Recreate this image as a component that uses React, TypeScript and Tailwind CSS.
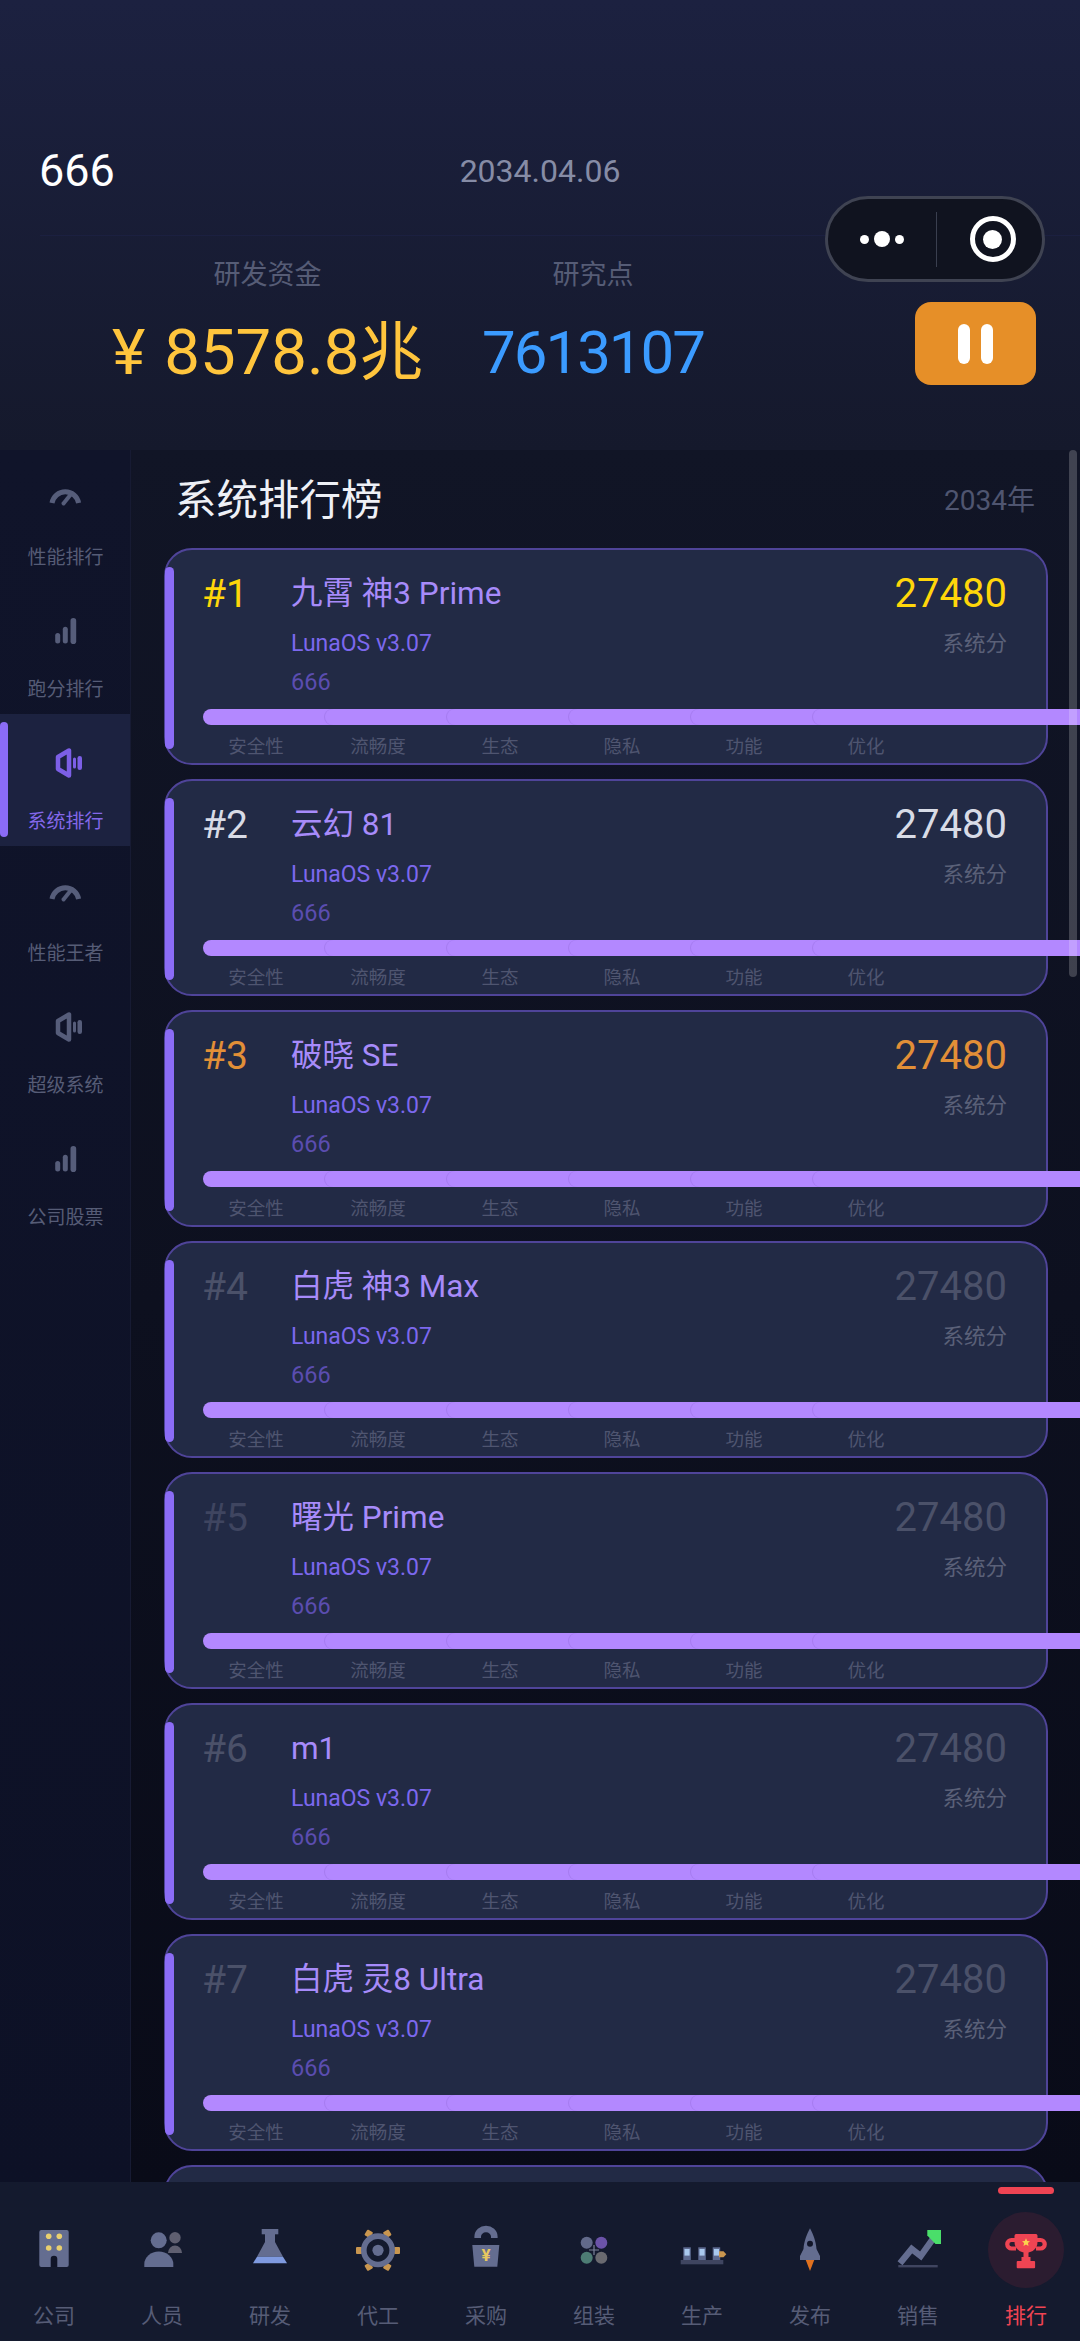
const FONT = "font-['Roboto','Noto_Sans_CJK_SC',sans-serif]";

const sideItems = [
  { label: '性能排行', icon: 'gauge' },
  { label: '跑分排行', icon: 'bars' },
  { label: '系统排行', icon: 'speaker', active: true },
  { label: '性能王者', icon: 'gauge' },
  { label: '超级系统', icon: 'speaker' },
  { label: '公司股票', icon: 'bars' },
];

const ranks = [
  { name: '九霄 神3 Prime', rank: 'text-[#ffd60a]', score: 'text-[#ffd60a]' },
  { name: '云幻 81', rank: 'text-[#d8dbe6]', score: 'text-[#d8dbe6]' },
  { name: '破晓 SE', rank: 'text-[#e28f37]', score: 'text-[#e28f37]' },
  { name: '白虎 神3 Max', rank: 'text-[#4b5169]', score: 'text-[#4b5169]' },
  { name: '曙光 Prime', rank: 'text-[#3f4560]', score: 'text-[#4b5169]' },
  { name: 'm1', rank: 'text-[#4b5169]', score: 'text-[#4b5169]' },
  { name: '白虎 灵8 Ultra', rank: 'text-[#4b5169]', score: 'text-[#4b5169]' },
];

const metrics = ['安全性', '流畅度', '生态', '隐私', '功能', '优化'];

const navItems = ['公司', '人员', '研发', '代工', '采购', '组装', '生产', '发布', '销售', '排行'];

function SideIcon({ type, color }: { type: string; color: string }) {
  if (type === 'gauge') {
    return (
      <svg width="40" height="40" viewBox="0 0 40 40" fill="none">
        <path d="M7 24A13.5 13.5 0 0 1 33.6 24" stroke={color} strokeWidth="5" />
        <path d="M18.5 24.5L26.5 14.5" stroke={color} strokeWidth="4" strokeLinecap="round" />
      </svg>
    );
  }
  if (type === 'bars') {
    return (
      <svg width="40" height="40" viewBox="0 0 40 40" fill={color}>
        <rect x="10.2" y="22" width="5" height="10.5" rx="2.5" />
        <rect x="17.8" y="15.7" width="5" height="16.8" rx="2.5" />
        <rect x="25.5" y="7" width="5.7" height="26" rx="2.8" />
      </svg>
    );
  }
  return (
    <svg width="40" height="40" viewBox="0 0 40 40" fill="none">
      <path d="M13 14L24 7.5V32.5L13 26Z" stroke={color} strokeWidth="4.5" strokeLinejoin="round" />
      <rect x="28" y="14.5" width="3" height="11" rx="1.5" fill={color} />
      <rect x="32.5" y="13" width="4.5" height="14" rx="2.2" fill={color} />
    </svg>
  );
}

function NavIcon({ index }: { index: number }) {
  const c = '#646d90';
  switch (index) {
    case 0:
      return (
        <svg width="60" height="60" viewBox="0 0 60 60">
          <rect x="15.3" y="10" width="29.4" height="37" rx="2" fill={c} />
          <circle cx="24.7" cy="16.3" r="2.8" fill="#e8cf6f" />
          <circle cx="35.3" cy="16.3" r="2.8" fill="#e8cf6f" />
          <circle cx="24.7" cy="28" r="2.8" fill="#e8cf6f" />
          <circle cx="35.3" cy="28" r="2.8" fill="#e8cf6f" />
          <path d="M26.7 47V39a3.3 3.3 0 0 1 6.6 0V47Z" fill="#111528" />
        </svg>
      );
    case 1:
      return (
        <svg width="60" height="60" viewBox="0 0 60 60">
          <circle cx="43" cy="17.7" r="5.7" fill="#5f5f70" />
          <path d="M36 33a7 7.5 0 0 1 14 0Z" fill="#5f5f70" />
          <circle cx="26.7" cy="20.3" r="8" fill={c} />
          <path d="M12.3 47V44a14.5 12.5 0 0 1 29 0V47Z" fill={c} />
        </svg>
      );
    case 2:
      return (
        <svg width="60" height="60" viewBox="0 0 60 60">
          <rect x="21.7" y="9" width="16.6" height="5.3" fill={c} />
          <path d="M25 14H35V22L43 36.7H17L25 22Z" fill={c} />
          <path d="M17 36.7H43L47 43.3H13Z" fill="#7f9ae0" />
        </svg>
      );
    case 3:
      return (
        <svg width="60" height="60" viewBox="0 0 60 60">
          <g fill="#c9964f">
            <rect x="8" y="27" width="6" height="7" rx="1" />
            <rect x="46" y="27" width="6" height="7" rx="1" />
            <rect x="17.5" y="10.5" width="6.5" height="6.5" rx="1" transform="rotate(30 20.7 13.7)" />
            <rect x="36" y="10.5" width="6.5" height="6.5" rx="1" transform="rotate(-30 39.3 13.7)" />
            <rect x="17.5" y="43.5" width="6.5" height="6.5" rx="1" transform="rotate(-30 20.7 46.7)" />
            <rect x="36" y="43.5" width="6.5" height="6.5" rx="1" transform="rotate(30 39.3 46.7)" />
          </g>
          <circle cx="30" cy="30.3" r="14.2" fill="none" stroke={c} strokeWidth="5.6" />
          <circle cx="30" cy="30.3" r="5.6" fill={c} />
        </svg>
      );
    case 4:
      return (
        <svg width="60" height="60" viewBox="0 0 60 60">
          <path d="M21.7 18V16.5A8.3 7.5 0 0 1 38.3 16.5V18" fill="none" stroke={c} strokeWidth="6.6" />
          <path d="M16.3 25H43.3L41.3 46.7H18.3Z" fill={c} />
          <text x="30" y="41" textAnchor="middle" fontSize="17" fontWeight="700" fill="#e8c860" fontFamily="Roboto, sans-serif">¥</text>
        </svg>
      );
    case 5:
      return (
        <svg width="60" height="60" viewBox="0 0 60 60">
          <circle cx="22.7" cy="22.7" r="6" fill="#626a8a" />
          <circle cx="37.3" cy="22.7" r="6" fill="#6b53a8" />
          <circle cx="22.7" cy="37.7" r="6" fill="#4d7c74" />
          <circle cx="37.3" cy="37.7" r="6" fill="#6a6a70" />
          <path d="M30 25V35M25 30H35" stroke="#7a8098" strokeWidth="1.2" />
        </svg>
      );
    case 6:
      return (
        <svg width="60" height="60" viewBox="0 0 60 60">
          <rect x="8.7" y="40" width="42.6" height="4.3" fill="#3f4560" />
          {[11.3, 26.3, 40.7].map((x) => (
            <g key={x}>
              <rect x={x} y="27.3" width="7.5" height="12.7" fill="#5d6a90" />
              <rect x={x + 1.2} y="29" width="5.1" height="6.6" fill="#a9c9ee" />
            </g>
          ))}
          <path d="M47 31.3H51.5L54.3 34.3L51.5 37.3H47Z" fill="#c9964f" />
        </svg>
      );
    case 7:
      return (
        <svg width="60" height="60" viewBox="0 0 60 60">
          <path d="M25 38L30 51L35 38Z" fill="#e0711f" />
          <path d="M30 8.3C33 14 36 21 36.5 29L40 36V40H20V36L23.5 29C24 21 27 14 30 8.3Z" fill={c} />
          <circle cx="30" cy="23.7" r="3" fill="#111528" />
        </svg>
      );
    case 8:
      return (
        <svg width="60" height="60" viewBox="0 0 60 60">
          <rect x="10.3" y="45" width="39.4" height="2.4" fill="#3f4560" />
          <path d="M12 43.3L23.7 29L32.7 36L46 17.3" fill="none" stroke={c} strokeWidth="6.4" />
          <path d="M39.3 10H53V24H47.5L39.3 15.5Z" fill="#4ade6a" />
        </svg>
      );
    default:
      return (
        <svg width="60" height="60" viewBox="0 0 60 60">
          <path d="M19 20H15.5A4.2 4.2 0 0 0 15.5 28.5H20M41 20H44.5A4.2 4.2 0 0 1 44.5 28.5H40" fill="none" stroke="#ef4453" strokeWidth="4.2" />
          <path d="M20 14H40C41 14 41.5 15 41.5 16V22C41.5 28 37 32.7 30 32.7C23 32.7 18.5 28 18.5 22V16C18.5 15 19 14 20 14Z" fill="#ef4453" />
          <path d="M30 18.2L31.2 20.9L34 21.2L31.9 23.1L32.5 26L30 24.5L27.5 26L28.1 23.1L26 21.2L28.8 20.9Z" fill="#fbd24e" />
          <rect x="27.5" y="32" width="5" height="6" fill="#ef4453" />
          <rect x="25.5" y="37" width="9" height="4" fill="#ef4453" />
          <rect x="20.7" y="41" width="18.4" height="7.3" rx="1" fill="#ef4453" />
        </svg>
      );
  }
}

function RankCard({ index }: { index: number }) {
  const item = ranks[index];
  return (
    <div className="relative h-[217px] w-[884px] shrink-0 rounded-[28px] border-[2.5px] border-[#4f4499] bg-[#222a45] pl-[29px] pr-[39px] pt-[24px]">
      <div className="absolute left-[-1px] top-[17px] h-[182px] w-[9px] rounded-full bg-[#8b6cf6]" />
      <div className="flex">
        <div className={`-ml-[1px] w-[62px] text-center text-[39px] leading-[40px] ${item.rank}`}>#{index + 1}</div>
        <div className="ml-[35px] flex-1">
          <div className="text-[31.5px] leading-[40px] text-[#a78bfa]">{item.name}</div>
          <div className="mt-[15px] text-[23px] leading-[30px] text-[#7c68ee]">LunaOS v3.07</div>
          <div className="mt-[8px] text-[23.5px] leading-[30px] text-[#5b4db0]">666</div>
        </div>
        <div className="text-right">
          <div className={`text-[40px] leading-[40px] ${item.score}`}>27480</div>
          <div className="mt-[15px] text-[21.5px] leading-[30px] text-[#5a6078]">系统分</div>
        </div>
      </div>
      <div className="mt-[12px] flex w-[900px] pl-[8px]">
        {metrics.map((m, i) => (
          <div
            key={m}
            className={`h-4 shrink-0 rounded-full bg-[#b388ff] ${
              i === 0 ? 'w-[136px] -mr-[14px]' : i === 5 ? 'w-[400px] shadow-[-1px_0_0_#a67cf0]' : 'w-[136px] -mr-[14px] shadow-[-1px_0_0_#a67cf0]'
            }`}
          />
        ))}
      </div>
      <div className="mt-[10px] flex">
        {metrics.map((m) => (
          <div key={m} className="w-[122px] shrink-0 text-center text-[18.5px] leading-[24px] text-[#4f5570]">
            {m}
          </div>
        ))}
      </div>
    </div>
  );
}

export default function App() {
  return (
    <div className={`relative flex h-[2341px] w-[1080px] flex-col overflow-hidden bg-[#111526] ${FONT}`}>
      {/* top status header */}
      <header className="h-[450px] shrink-0 bg-gradient-to-b from-[#1c2140] to-[#15192c] pt-[146px]">
        <div className="relative flex h-[50px] items-center pl-[39px]">
          <span className="text-[45px] leading-[50px] text-white">666</span>
          <span className="absolute left-0 right-0 text-center text-[32px] leading-[50px] text-[#868ca6]">2034.04.06</span>
        </div>
        <div className="ml-[40px] mt-[39px] h-px bg-[#1b2040]" />
        <div className="mt-[21px] flex items-end justify-between pl-[114px] pr-[44px]">
          <div className="flex gap-[61px]">
            <div className="flex w-[307px] flex-col items-center">
              <div className="text-[27px] leading-[36px] text-[#565c76]">研发资金</div>
              <div className="mt-[22px] whitespace-nowrap text-[63.5px] leading-[76px] text-[#ffc53d] [word-spacing:3px]">¥ 8578.8兆</div>
            </div>
            <div className="flex w-[222px] flex-col items-center">
              <div className="text-[27px] leading-[36px] text-[#565c76]">研究点</div>
              <div className="mt-[22px] text-[60px] leading-[76px] tracking-[-2px] text-[#3b9bff]">7613107</div>
            </div>
          </div>
          <div className="mb-[6px] flex h-[83px] w-[121px] items-center justify-center gap-[11px] rounded-2xl bg-[#e68f28]">
            <div className="h-10 w-3 rounded-full bg-white" />
            <div className="h-10 w-3 rounded-full bg-white" />
          </div>
        </div>
      </header>

      {/* mini program capsule */}
      <div className="absolute left-[825px] top-[196px] flex h-[86px] w-[220px] items-center rounded-full border-[3px] border-[#3f4352] bg-[#10131f]">
        <div className="flex w-[108px] items-center justify-center gap-[5px]">
          <div className="h-[9px] w-[9px] rounded-full bg-white" />
          <div className="h-4 w-4 rounded-full bg-white" />
          <div className="h-[9px] w-[9px] rounded-full bg-white" />
        </div>
        <div className="h-[55px] w-px bg-[#3a3f4f]" />
        <div className="flex flex-1 items-center justify-center pl-[6px]">
          <div className="flex h-[46px] w-[46px] items-center justify-center rounded-full border-[5px] border-white">
            <div className="h-[19px] w-[19px] rounded-full bg-white" />
          </div>
        </div>
      </div>

      <div className="flex min-h-0 flex-1">
        <aside className="w-[131px] shrink-0 border-r border-[#171b33] bg-gradient-to-b from-[#10142a] to-[#0d1126]">
          {sideItems.map((s) => (
            <div key={s.label} className={`relative flex h-[132px] flex-col items-center pt-[29px] ${s.active ? 'bg-[#1c2240]' : ''}`}>
              {s.active && <div className="absolute bottom-[9px] left-0 top-[8px] w-2 rounded-full bg-[#8b6cf6]" />}
              <SideIcon type={s.icon} color={s.active ? '#7c5fe6' : '#565d7a'} />
              <div className={`mt-[25px] pl-[1px] text-[19px] leading-[28px] ${s.active ? 'text-[#8468ea]' : 'text-[#565c76]'}`}>{s.label}</div>
            </div>
          ))}
        </aside>
        <main className="min-w-0 flex-1 overflow-hidden bg-gradient-to-b from-[#111526] to-[#090b18] pl-[33px]">
          <div className="flex h-[98px] items-center justify-between pl-[11px] pr-[45px] pt-[4px]">
            <h1 className="text-[41.5px] font-normal text-[#eef0f6]">系统排行榜</h1>
            <span className="text-[28px] text-[#4f5570]">2034年</span>
          </div>
          <div className="flex flex-col gap-[14px]">
            {ranks.map((_, i) => (
              <RankCard key={i} index={i} />
            ))}
            {/* eighth card only peeks out above the tab bar */}
            <div className="h-[217px] w-[884px] shrink-0 rounded-[28px] border-[2.5px] border-[#4f4499] bg-[#222a45]" />
          </div>
        </main>
      </div>

      {/* scrollbar sits over the bars */}
      <div className="absolute left-[1069px] top-[450px] h-[527px] w-2 rounded-full bg-white/20" />

      <nav className="relative flex h-[159px] shrink-0 bg-[#141a2e] pt-[38px]">
        <div className="absolute left-[998px] top-[5px] h-[7px] w-14 rounded-full bg-[#ef4453]" />
        <div className="absolute left-[988px] top-[30px] h-[76px] w-[76px] rounded-full bg-[#2b1c30]" />
        {navItems.map((n, i) => (
          <div key={n} className="relative flex w-[108px] flex-col items-center">
            <NavIcon index={i} />
            <div className={`mt-[22px] text-[21px] leading-[28px] ${i === 9 ? 'text-[#ef4453]' : 'text-[#565c76]'}`}>{n}</div>
          </div>
        ))}
      </nav>
    </div>
  );
}
